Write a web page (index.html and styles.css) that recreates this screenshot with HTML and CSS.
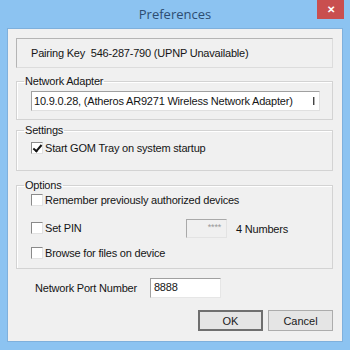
FILE: index.html
```html
<!DOCTYPE html>
<html lang="en">
<head>
  <meta charset="UTF-8">
  <title>Preferences</title>
  <link rel="stylesheet" href="styles.css">
</head>
<body>
  <div class="window">
    <div class="titlebar">
      <span class="title">Preferences</span>
      <span class="close">&#x2715;</span>
    </div>
    <div class="client">
      <div class="pairing">Pairing Key&nbsp; 546-287-790 (UPNP Unavailable)</div>

      <fieldset class="group adapter">
        <legend>Network Adapter</legend>
        <div class="combo">
          <span>10.9.0.28, (Atheros AR9271 Wireless Network Adapter)</span>
          <span class="arrow"></span>
        </div>
      </fieldset>

      <fieldset class="group settings">
        <legend>Settings</legend>
        <label class="check"><span class="box checked"></span>Start GOM Tray on system startup</label>
      </fieldset>

      <fieldset class="group options">
        <legend>Options</legend>
        <label class="check"><span class="box"></span>Remember previously authorized devices</label>
        <div class="pin-row">
          <label class="check"><span class="box"></span>Set PIN</label>
          <div class="pin-input">****</div>
          <span class="pin-hint">4 Numbers</span>
        </div>
        <label class="check last"><span class="box"></span>Browse for files on device</label>
      </fieldset>

      <div class="port-row">
        <span>Network Port Number</span>
        <div class="port-input">8888</div>
      </div>

      <div class="buttons">
        <button class="btn default">OK</button>
        <button class="btn">Cancel</button>
      </div>
    </div>
  </div>
</body>
</html>
```

FILE: styles.css
```css
* {
  box-sizing: border-box;
}

body {
  margin: 0;
  font-family: "Liberation Sans", Arial, sans-serif;
  font-size: 11px;
  letter-spacing: -0.2px;
  color: #151515;
}

.window {
  width: 350px;
  height: 350px;
  background-color: #8cc3f1; /* frame blue */
  display: flex;
  flex-direction: column;
}

.titlebar {
  height: 28px;
  flex: none;
  position: relative;
  display: flex;
  justify-content: center;
  align-items: center;
}

.title {
  font-family: "Open Sans", "Liberation Sans", sans-serif;
  font-size: 13px;
  letter-spacing: 0;
  color: #2d4d72;
  margin-top: -1px;
}

.close {
  position: absolute;
  top: 0;
  right: 6px;
  width: 27px;
  height: 19px;
  background-color: #c94f4f;
  color: #ffffff;
  font-size: 10px;
  font-weight: bold;
  display: flex;
  justify-content: center;
  align-items: center;
}

.client {
  flex: 1;
  margin: 0 7px 8px 7px;
  background-color: #f0f0f0;
  border: 1px solid #7fb0dc;
  padding: 9px 9px 0 8px;
  display: flex;
  flex-direction: column;
}

.pairing {
  height: 30px;
  flex: none;
  border: 1px solid #b4b4b4;
  border-right-color: #dcdcdc;
  border-bottom-color: #dcdcdc;
  display: flex;
  align-items: center;
  padding-left: 14px;
}

.group {
  margin: 0;
  flex: none;
  border: 1px solid #d3d3d3;
  box-shadow: inset 1px 1px #ffffff;
  padding: 0 12px 0 14px;
}

.group legend {
  padding: 0 1px;
  margin-left: -7px;
  line-height: 14px;
  height: 14px;
}

.adapter {
  margin-top: 6px;
  height: 46px;
}

.combo {
  margin-top: 3px;
  height: 20px;
  background-color: #ffffff;
  border: 1px solid #a0a0a0;
  border-right-color: #e0e0e0;
  border-bottom-color: #e0e0e0;
  display: flex;
  align-items: center;
  justify-content: space-between;
  padding: 0 3px 0 2px;
  white-space: nowrap;
}

.arrow {
  width: 2px;
  height: 8px;
  border-left: 1px solid #444444;
  border-right: 1px solid #b0b0b0;
  margin-right: 1px;
}

.settings {
  margin-top: 3px;
  height: 48px;
}

.options {
  margin-top: 7px;
  height: 91px;
}

.check {
  display: flex;
  align-items: center;
  height: 16px;
}

.settings .check {
  margin-top: 3px;
}

.box {
  width: 12px;
  height: 12px;
  background-color: #ffffff;
  border: 1px solid #8a8a8a;
  border-right-color: #e2e2e2;
  border-bottom-color: #e2e2e2;
  margin-right: 2px;
  position: relative;
  flex: none;
}

.box.checked::after {
  content: "";
  position: absolute;
  left: 3px;
  top: 0;
  width: 3px;
  height: 7px;
  border: solid #111111;
  border-width: 0 2px 2px 0;
  transform: rotate(40deg);
}

.pin-row {
  display: flex;
  align-items: center;
  margin-top: 10px;
  height: 20px;
}

.pin-row .check {
  width: 155px;
}

.pin-input {
  width: 41px;
  height: 19px;
  border: 1px solid #a9a9a9;
  border-right-color: #e3e3e3;
  border-bottom-color: #e3e3e3;
  text-align: right;
  padding-right: 5px;
  color: #9a9a9a;
  font-size: 9px;
  line-height: 14px;
}

.pin-hint {
  margin-left: 9px;
  margin-top: 2px;
}

.check.last {
  margin-top: 7px;
}

.port-row {
  display: flex;
  align-items: center;
  flex: none;
  height: 20px;
  margin-top: 9px;
  padding-left: 19px;
}

.port-input {
  margin-left: 13px;
  width: 71px;
  height: 20px;
  background-color: #ffffff;
  border: 1px solid #a0a0a0;
  border-right-color: #e6e6e6;
  border-bottom-color: #e6e6e6;
  padding-left: 3px;
  line-height: 16px;
}

.buttons {
  display: flex;
  justify-content: flex-end;
  gap: 5px;
  margin-top: 12px;
}

.btn {
  width: 65px;
  height: 21px;
  font-family: "Liberation Sans", Arial, sans-serif;
  font-size: 11px;
  color: #1a1a1a;
  background-color: #e5e5e5;
  border: 1px solid #acacac;
  padding: 0;
}

.btn.default {
  border: 2px solid #6f6f6f;
}
```
